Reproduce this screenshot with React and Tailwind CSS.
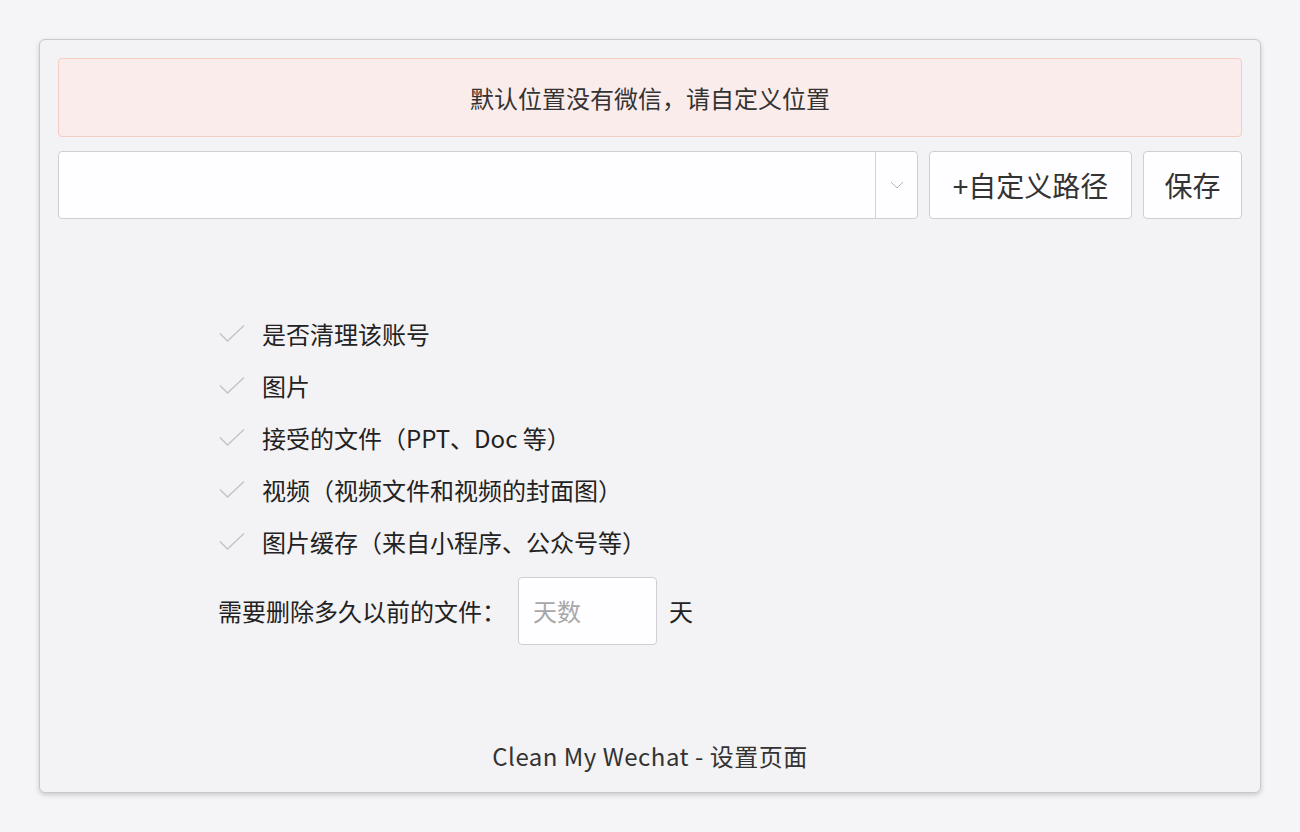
import React from 'react';

const items = [
  '是否清理该账号',
  '图片',
  '接受的文件（PPT、Doc 等）',
  '视频（视频文件和视频的封面图）',
  '图片缓存（来自小程序、公众号等）',
];

function Check() {
  return (
    <svg width="28" height="28" viewBox="0 0 28 28" fill="none" className="shrink-0">
      <path d="M2 13.5 L9.5 21 L26 5.5" stroke="#c2c2c4" strokeWidth="1.3" />
    </svg>
  );
}

export default function App() {
  return (
    <div
      className="min-h-screen bg-[#f5f4f6] p-[39px] text-[#222]"
      style={{ fontFamily: '"Noto Sans CJK SC", "Noto Sans", sans-serif' }}
    >
      <div className="flex h-[754px] flex-col rounded-[6px] border border-[#c9c9cb] bg-[#f3f2f4] px-[18px] pt-[18px] shadow-[0_2px_5px_rgba(0,0,0,0.18)]">
        {/* alert */}
        <div className="flex h-[79px] items-center justify-center rounded-[4px] border border-[#f5cbc3] bg-[#fbecec] text-[24px] text-[#333]">
          默认位置没有微信，请自定义位置
        </div>

        {/* path row */}
        <div className="mt-[14px] flex h-[68px] gap-[11px]">
          <div className="flex flex-1 rounded-[4px] border border-[#cfcfd1] bg-[#fefdff]">
            <div className="flex-1" />
            <div className="flex w-[42px] items-center justify-center border-l border-[#d4d4d6]">
              <svg width="14" height="8" viewBox="0 0 14 8" fill="none">
                <path d="M1 1 L7 7 L13 1" stroke="#b5b5b7" strokeWidth="1" />
              </svg>
            </div>
          </div>
          <button className="w-[203px] rounded-[4px] border border-[#cfcfd1] bg-[#fefdff] text-[28px] text-[#333]">
            +自定义路径
          </button>
          <button className="w-[99px] rounded-[4px] border border-[#cfcfd1] bg-[#fefdff] text-[28px] text-[#333]">
            保存
          </button>
        </div>

        {/* options */}
        <div className="mt-[89px] flex flex-col pl-[160px]">
          {items.map((t) => (
            <div key={t} className="flex h-[52px] items-center gap-[16px]">
              <Check />
              <span className="text-[24px] leading-none">{t}</span>
            </div>
          ))}
          <div className="mt-[9px] flex items-center">
            <span className="text-[24px]">需要删除多久以前的文件：</span>
            <div className="ml-[12px] flex h-[68px] w-[139px] items-center rounded-[4px] border border-[#cfcfd1] bg-[#fefdff] px-[14px] text-[24px] text-[#a8a8aa]">
              天数
            </div>
            <span className="ml-[12px] text-[24px]">天</span>
          </div>
        </div>

        {/* footer */}
        <div className="mt-auto mb-[16px] flex h-[40px] items-center justify-center text-[24px] tracking-[0.5px] text-[#333]">
          Clean My Wechat - 设置页面
        </div>
      </div>
    </div>
  );
}
